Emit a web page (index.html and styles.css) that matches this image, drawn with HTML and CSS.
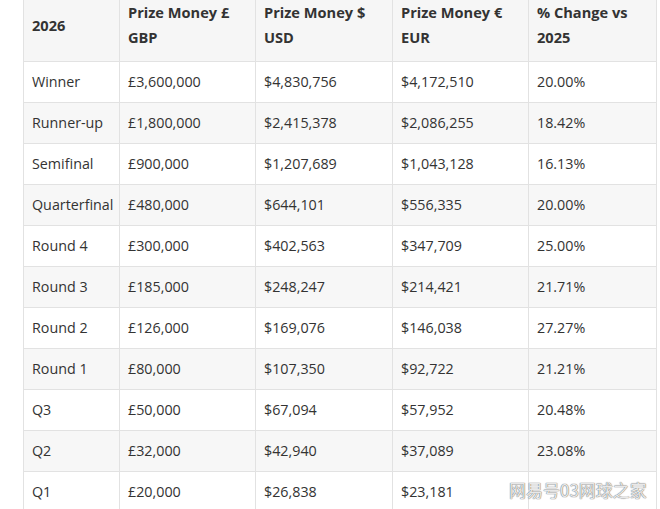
FILE: index.html
```html
<!DOCTYPE html>
<html lang="en">
<head>
<meta charset="utf-8">
<title>2026 Prize Money</title>
<link rel="stylesheet" href="styles.css">
</head>
<body>
<div class="page">
  <table class="prize">
    <colgroup>
      <col class="c1"><col class="c2"><col class="c3"><col class="c4"><col class="c5">
    </colgroup>
    <thead>
      <tr><th>2026</th><th>Prize Money £<br>GBP</th><th>Prize Money $<br>USD</th><th>Prize Money €<br>EUR</th><th>% Change vs<br>2025</th></tr>
    </thead>
    <tbody>
      <tr><td>Winner</td><td>£3,600,000</td><td>$4,830,756</td><td>$4,172,510</td><td>20.00%</td></tr>
      <tr><td>Runner-up</td><td>£1,800,000</td><td>$2,415,378</td><td>$2,086,255</td><td>18.42%</td></tr>
      <tr><td>Semifinal</td><td>£900,000</td><td>$1,207,689</td><td>$1,043,128</td><td>16.13%</td></tr>
      <tr><td>Quarterfinal</td><td>£480,000</td><td>$644,101</td><td>$556,335</td><td>20.00%</td></tr>
      <tr><td>Round 4</td><td>£300,000</td><td>$402,563</td><td>$347,709</td><td>25.00%</td></tr>
      <tr><td>Round 3</td><td>£185,000</td><td>$248,247</td><td>$214,421</td><td>21.71%</td></tr>
      <tr><td>Round 2</td><td>£126,000</td><td>$169,076</td><td>$146,038</td><td>27.27%</td></tr>
      <tr><td>Round 1</td><td>£80,000</td><td>$107,350</td><td>$92,722</td><td>21.21%</td></tr>
      <tr><td>Q3</td><td>£50,000</td><td>$67,094</td><td>$57,952</td><td>20.48%</td></tr>
      <tr><td>Q2</td><td>£32,000</td><td>$42,940</td><td>$37,089</td><td>23.08%</td></tr>
      <tr><td>Q1</td><td>£20,000</td><td>$26,838</td><td>$23,181</td><td></td></tr>
    </tbody>
  </table>
  <div class="watermark">网易号03网球之家</div>
</div>
</body>
</html>
```
FILE: styles.css
```css
html, body {
  margin: 0;
  padding: 0;
  background: #ffffff;
}
.page {
  position: relative;
  width: 660px;
  height: 509px;
  overflow: hidden;
  padding-left: 23px;
  box-sizing: border-box;
}
.prize {
  border-collapse: collapse;
  margin-top: -12px;
  width: 633px;
  font-family: "Open Sans", "Noto Sans", sans-serif;
  font-size: 14.3px;
  color: #333333;
  table-layout: fixed;
}
.c1 { width: 96px; }
.c2 { width: 136px; }
.c3 { width: 137px; }
.c4 { width: 136px; }
.c5 { width: 128px; }
.prize th,
.prize td {
  border: 1px solid #e2e2e2;
  text-align: left;
  vertical-align: middle;
  white-space: nowrap;
  overflow: hidden;
}
.prize th {
  background: #f6f6f6;
  font-weight: 700;
  line-height: 25px;
  padding: 11px 8px 11px 8px;
  font-size: 14.6px;
}
.prize td {
  line-height: 24px;
  padding: 8px 8px;
}
.prize tbody tr:nth-child(even) td {
  background: #f7f7f7;
}
.watermark {
  position: absolute;
  left: 509px;
  top: 478px;
  font-family: "Noto Sans CJK SC", sans-serif;
  font-size: 17px;
  line-height: 24px;
  color: rgba(255, 255, 255, 0.85);
  text-shadow: 0 0 1px #6f6f6f, 0 0 1px #6f6f6f;
}
```
